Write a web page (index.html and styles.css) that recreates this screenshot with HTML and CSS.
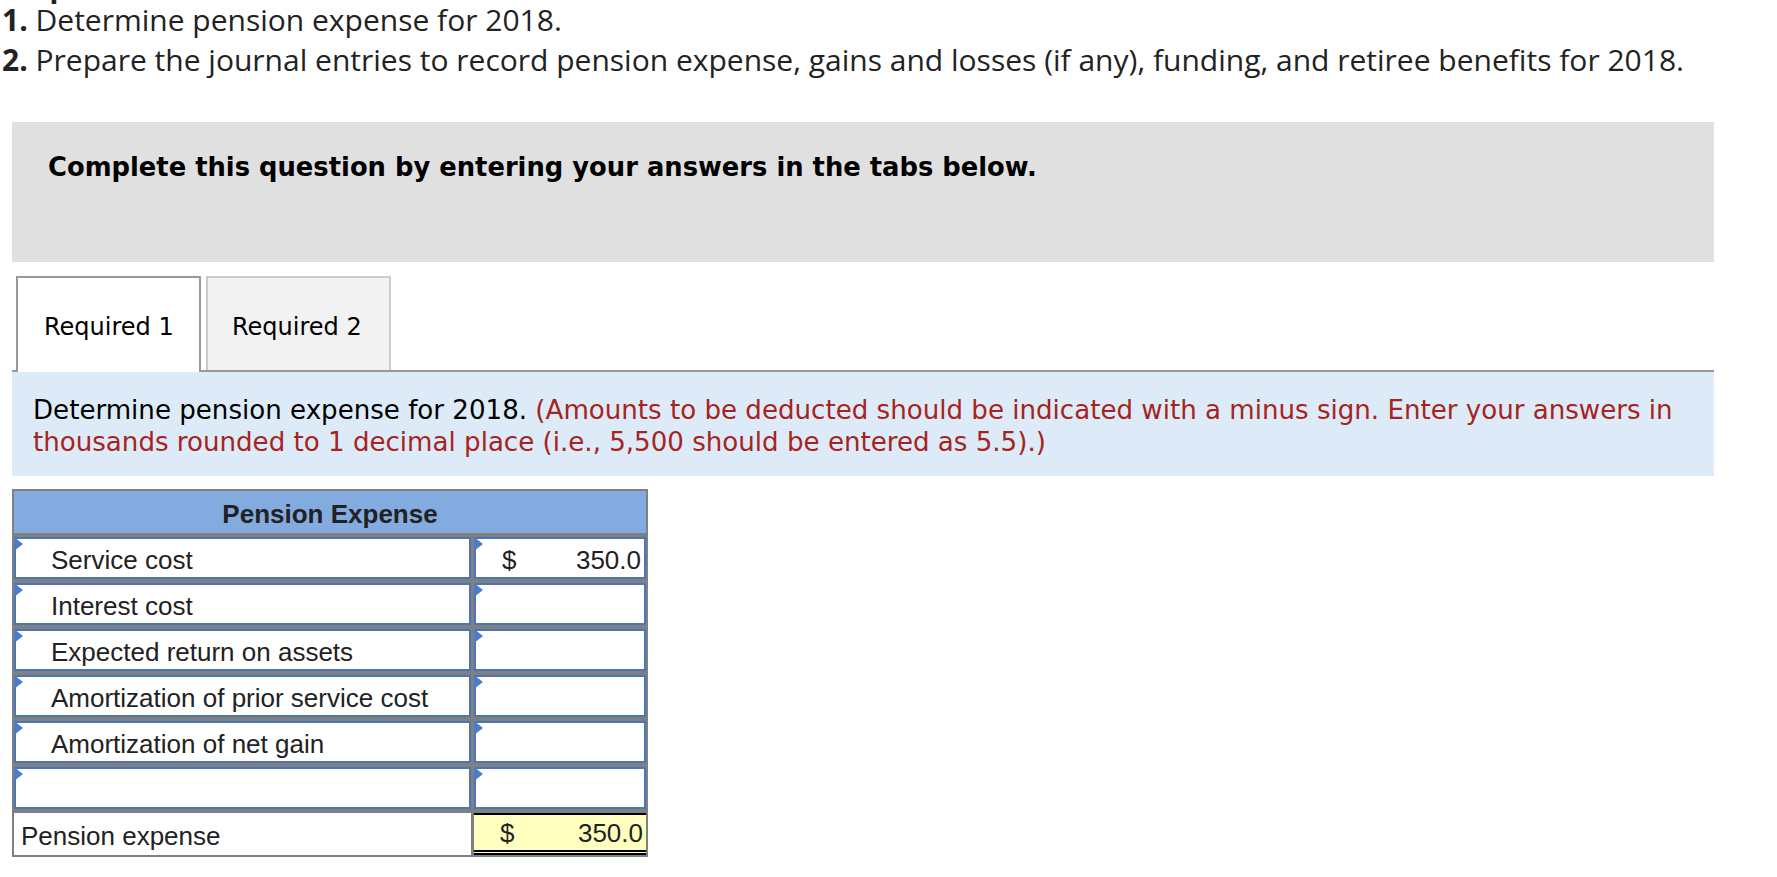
FILE: index.html
```html
<!DOCTYPE html>
<html lang="en">
<head>
<meta charset="utf-8">
<title>Pension Expense</title>
<link rel="stylesheet" href="styles.css">
</head>
<body>
<div class="page">
  <div class="question">
    <p class="req-title">Required:</p>
    <p class="qline"><b>1.</b> Determine pension expense for 2018.</p>
    <p class="qline"><b>2.</b> Prepare the journal entries to record pension expense, gains and losses (if any), funding, and retiree benefits for 2018.</p>
  </div>

  <div class="instructions">Complete this question by entering your answers in the tabs below.</div>

  <div class="tabs">
    <div class="tab tab-active">Required 1</div>
    <div class="tab tab-idle">Required 2</div>
  </div>

  <div class="prompt">Determine pension expense for 2018. <span class="hint">(Amounts to be deducted should be indicated with a minus sign. Enter your answers in thousands rounded to 1 decimal place (i.e., 5,500 should be entered as 5.5).)</span></div>

  <div class="pe">
    <div class="pe-head">Pension Expense</div>

    <div class="cell label">Service cost</div>
    <div class="cell value"><span>$</span><span>350.0</span></div>

    <div class="cell label">Interest cost</div>
    <div class="cell value"></div>

    <div class="cell label">Expected return on assets</div>
    <div class="cell value"></div>

    <div class="cell label">Amortization of prior service cost</div>
    <div class="cell value"></div>

    <div class="cell label">Amortization of net gain</div>
    <div class="cell value"></div>

    <div class="cell label"></div>
    <div class="cell value"></div>

    <div class="total-label">Pension expense</div>
    <div class="total-value"><span>$</span><span>350.0</span></div>
  </div>
</div>
</body>
</html>
```

FILE: styles.css
```css
html, body {
  margin: 0;
  padding: 0;
  background: #ffffff;
}

.page {
  width: 1777px;
  overflow: hidden;
  height: 877px;
}

.question {
  padding-left: 2px;
  font-family: "Open Sans", Lato, sans-serif;
  font-size: 30px;
  color: #222222;
}

.question p {
  margin: 0;
  line-height: 40px;
}

.question .req-title {
  font-weight: bold;
  margin-top: -34px;
  margin-bottom: -6px;
}

.qline b {
  font-weight: bold;
}

.instructions {
  margin: 42px 63px 0 12px;
  height: 140px;
  box-sizing: border-box;
  padding: 29px 0 0 36px;
  background: #e0e0e0;
  font-family: "DejaVu Sans", Verdana, sans-serif;
  font-weight: bold;
  font-size: 25.8px;
  line-height: 32px;
  color: #000000;
}

.tabs {
  margin: 14px 63px 0 12px;
  padding-left: 4px;
  display: flex;
  gap: 5px;
  border-bottom: 2px solid #999999;
  height: 94px;
}

.tab {
  box-sizing: border-box;
  width: 185px;
  height: 94px;
  padding-left: 26px;
  padding-top: 7px;
  font-family: "DejaVu Sans", Verdana, sans-serif;
  font-size: 24px;
  line-height: 85px;
  color: #000000;
}

.tab-active {
  background: #ffffff;
  border: 2px solid #999999;
  border-bottom: none;
  height: 96px;
  margin-bottom: -2px;
}

.tab-idle {
  background: #f2f2f2;
  border: 2px solid #cccccc;
  border-bottom: none;
  padding-left: 24px;
}

.prompt {
  margin: 0 63px 0 12px;
  background: #ddebf8;
  padding: 22px 20px 18px 21px;
  font-family: "DejaVu Sans", Verdana, sans-serif;
  font-size: 26.1px;
  line-height: 32px;
  color: #000000;
}

.hint {
  color: #a6231e;
}

.pe {
  margin: 13px 0 0 12px;
  width: fit-content;
  display: grid;
  grid-template-columns: 457px 172px;
  column-gap: 3px;
  row-gap: 4px;
  padding: 2px;
  background: #808080;
  font-family: "Liberation Sans", Arial, sans-serif;
  font-size: 26px;
  color: #222222;
}

.pe-head {
  grid-column: 1 / -1;
  box-sizing: border-box;
  height: 42px;
  padding-top: 4px;
  background: #84abe0;
  font-weight: bold;
  text-align: center;
  line-height: 38px;
}

.cell {
  position: relative;
  box-sizing: border-box;
  height: 42px;
  background: #ffffff;
  border: 2px solid #4a76b8;
  padding-top: 4px;
  line-height: 34px;
}

.cell::before {
  content: "";
  position: absolute;
  top: -2px;
  left: -2px;
  width: 0;
  height: 0;
  border-left: 9px solid #4a7cc8;
  border-top: 7px solid transparent;
  border-bottom: 7px solid transparent;
}

.label {
  padding-left: 35px;
}

.value {
  display: flex;
  justify-content: space-between;
  padding-right: 3px;
  padding-left: 26px;
}

.total-label {
  box-sizing: border-box;
  height: 42px;
  background: #ffffff;
  padding: 4px 0 0 7px;
  line-height: 38px;
}

.total-value {
  box-sizing: border-box;
  height: 42px;
  background: #ffffc0;
  border-top: 2px solid #000000;
  border-bottom: 5px double #000000;
  display: flex;
  justify-content: space-between;
  padding: 2px 3px 0 26px;
  line-height: 33px;
}
```
